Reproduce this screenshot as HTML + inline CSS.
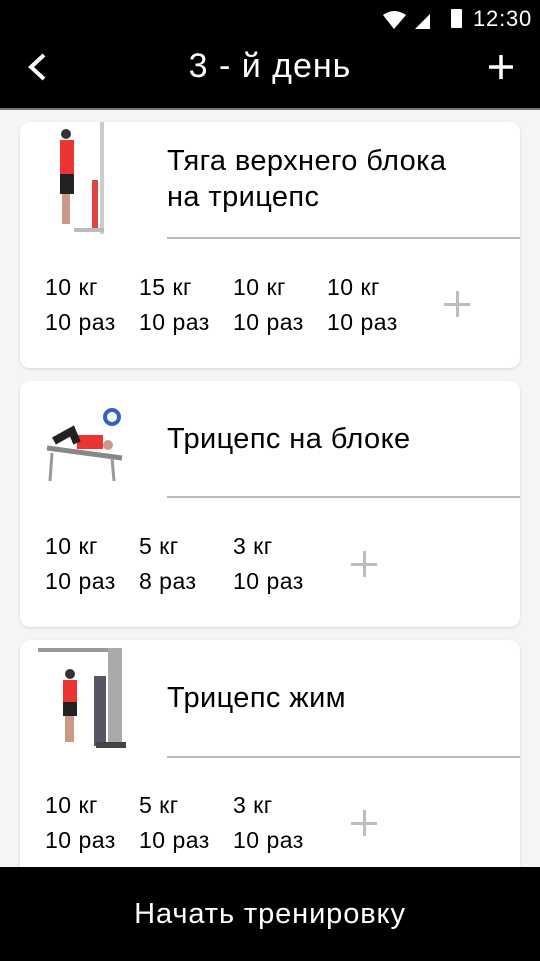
<!DOCTYPE html>
<html><head><meta charset="utf-8"><style>
*{margin:0;padding:0;box-sizing:border-box}
body{width:540px;height:961px;overflow:hidden;background:#f5f5f5;font-family:"Liberation Sans","Noto Sans CJK SC",sans-serif;position:relative;color:#000}
.top{position:absolute;left:0;top:0;width:540px;height:108px;background:#000;color:#fff}
.line{position:absolute;top:108px;left:0;width:540px;height:2px;background:#777}
.card{position:absolute;left:20px;width:500px;background:#fff;border-radius:10px;box-shadow:0 1px 3px rgba(0,0,0,.12)}
.title{position:absolute;left:147px;font-size:29px;line-height:36px;letter-spacing:0.4px}
.div{position:absolute;left:147px;right:0;height:2px;background:#bbb}
.st{position:absolute;font-size:23px;line-height:35px;letter-spacing:0.5px}
.plus{position:absolute;width:26px;height:26px}
.plus:before,.plus:after{content:"";position:absolute;background:#bdbdbd}
.plus:before{left:12px;top:0;width:3px;height:26px}
.plus:after{top:12px;left:0;height:3px;width:26px}
.bot{position:absolute;left:0;top:867px;width:540px;height:94px;background:#000;color:#fff;font-size:29px;letter-spacing:0.9px;text-align:center;line-height:94px}
</style></head><body>
<div class="top">
<svg style="position:absolute;left:380px;top:9px" width="60" height="22"><path d="M3 6 Q14 -2 26 6 L14 20Z" fill="#fff"/><path d="M35 20 L50 5 L50 20Z" fill="#fff"/></svg>
<div style="position:absolute;left:451px;top:9px;width:11px;height:19px;background:#fff;border-radius:1px"></div>
<div style="position:absolute;left:473px;top:6px;font-size:22px;letter-spacing:0.8px">12:30</div>
<svg style="position:absolute;left:25px;top:52px" width="24" height="30"><path d="M19 3 L6 15 L19 27" stroke="#fff" stroke-width="4" fill="none"/></svg>
<div style="position:absolute;left:0;width:540px;text-align:center;top:47px;font-size:34px;letter-spacing:1px">3 - й день</div>
<svg style="position:absolute;left:487px;top:53px" width="28" height="28"><path d="M14 2V26M2 14H26" stroke="#fff" stroke-width="3.5"/></svg>
</div>
<div class="line"></div>

<div class="card" style="top:122px;height:246px">
<svg style="position:absolute;left:28px;top:0" width="70" height="118"><rect x="52" y="0" width="4" height="112" fill="#ccc"/><rect x="44" y="58" width="6" height="50" fill="#d44"/><rect x="26" y="106" width="30" height="4" fill="#bbb"/><circle cx="18" cy="12" r="5" fill="#333"/><rect x="12" y="18" width="14" height="34" fill="#e33"/><rect x="12" y="52" width="14" height="20" fill="#222"/><rect x="14" y="72" width="8" height="30" fill="#c98"/></svg>
<div class="title" style="top:21px">Тяга верхнего блока<br>на трицепс</div>
<div class="div" style="top:115px"></div>
<div class="st" style="left:25px;top:148px">10 кг<br>10 раз</div>
<div class="st" style="left:119px;top:148px">15 кг<br>10 раз</div>
<div class="st" style="left:213px;top:148px">10 кг<br>10 раз</div>
<div class="st" style="left:307px;top:148px">10 кг<br>10 раз</div>
<div class="plus" style="left:424px;top:169px"></div>
</div>

<div class="card" style="top:381px;height:246px">
<svg style="position:absolute;left:22px;top:22px" width="90" height="80"><circle cx="70" cy="14" r="9" fill="#36b"/><circle cx="70" cy="14" r="5" fill="#fff"/><path d="M5 45 L80 55" stroke="#888" stroke-width="5"/><rect x="35" y="32" width="26" height="14" fill="#e33"/><path d="M12 38 L30 28 L35 40" stroke="#222" stroke-width="8" fill="none"/><circle cx="66" cy="42" r="5" fill="#c98"/><path d="M10 50 L8 78 M70 55 L72 78" stroke="#999" stroke-width="3"/></svg>
<div class="title" style="top:40px">Трицепс на блоке</div>
<div class="div" style="top:115px"></div>
<div class="st" style="left:25px;top:148px">10 кг<br>10 раз</div>
<div class="st" style="left:119px;top:148px">5 кг<br>8 раз</div>
<div class="st" style="left:213px;top:148px">3 кг<br>10 раз</div>
<div class="plus" style="left:331px;top:170px"></div>
</div>

<div class="card" style="top:640px;height:260px">
<svg style="position:absolute;left:18px;top:6px" width="90" height="106"><rect x="0" y="2" width="84" height="4" fill="#999"/><rect x="70" y="2" width="14" height="100" fill="#aaa"/><rect x="56" y="30" width="12" height="70" fill="#556"/><rect x="58" y="96" width="30" height="6" fill="#444"/><circle cx="32" cy="28" r="5" fill="#333"/><rect x="25" y="34" width="14" height="22" fill="#e33"/><rect x="25" y="56" width="14" height="14" fill="#222"/><rect x="27" y="70" width="9" height="26" fill="#c98"/></svg>
<div class="title" style="top:40px">Трицепс жим</div>
<div class="div" style="top:116px"></div>
<div class="st" style="left:25px;top:148px">10 кг<br>10 раз</div>
<div class="st" style="left:119px;top:148px">5 кг<br>10 раз</div>
<div class="st" style="left:213px;top:148px">3 кг<br>10 раз</div>
<div class="plus" style="left:331px;top:170px"></div>
</div>

<div class="bot">Начать тренировку</div>
</body></html>
